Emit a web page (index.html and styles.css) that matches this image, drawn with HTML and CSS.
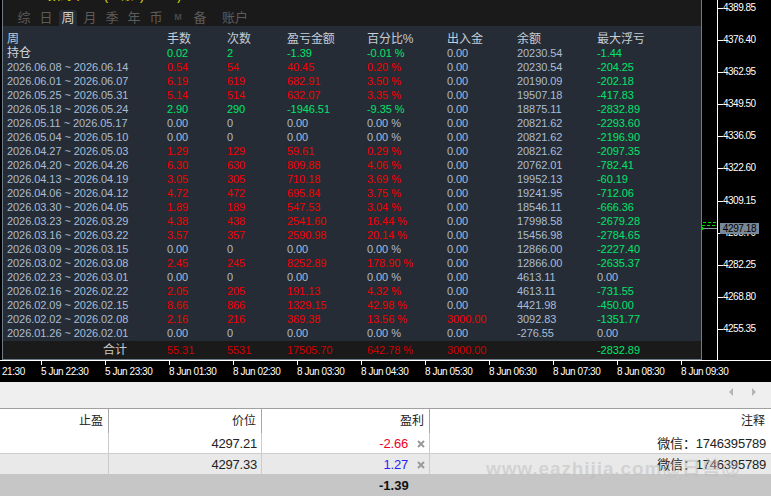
FILE: index.html
```html
<!DOCTYPE html>
<html lang="zh">
<head>
<meta charset="utf-8">
<title>Report</title>
<link rel="stylesheet" href="styles.css">
</head>
<body>
<div class="app">
  <div class="chart">
    <div class="plot">
      <div class="panel">
        <div class="clip-text">数码币      (    账  )          )</div>
        <div class="tabs">
          <span class="tab">综</span><span class="tab">日</span><span class="tab active">周</span><span class="tab">月</span><span class="tab">季</span><span class="tab">年</span><span class="tab">币</span><span class="tab m">M</span><span class="tab">备</span><span class="tab wide">账户</span>
        </div>
        <div class="table">
          <div class="row head"><span>周</span><span>手数</span><span>次数</span><span>盈亏金额</span><span>百分比%</span><span>出入金</span><span>余额</span><span>最大浮亏</span></div>
          <div class="row hold"><span class="h">持仓</span><span class="g">0.02</span><span class="g">2</span><span class="g">-1.39</span><span class="g">-0.01 %</span><span>0.00</span><span>20230.54</span><span class="g">-1.44</span></div>
          <div class="row"><span>2026.06.08 ~ 2026.06.14</span><span class="r">0.54</span><span class="r">54</span><span class="r">40.45</span><span class="r">0.20 %</span><span>0.00</span><span>20230.54</span><span class="g">-204.25</span></div>
          <div class="row"><span>2026.06.01 ~ 2026.06.07</span><span class="r">6.19</span><span class="r">619</span><span class="r">682.91</span><span class="r">3.50 %</span><span>0.00</span><span>20190.09</span><span class="g">-202.18</span></div>
          <div class="row"><span>2026.05.25 ~ 2026.05.31</span><span class="r">5.14</span><span class="r">514</span><span class="r">632.07</span><span class="r">3.35 %</span><span>0.00</span><span>19507.18</span><span class="g">-417.83</span></div>
          <div class="row"><span>2026.05.18 ~ 2026.05.24</span><span class="g">2.90</span><span class="g">290</span><span class="g">-1946.51</span><span class="g">-9.35 %</span><span>0.00</span><span>18875.11</span><span class="g">-2832.89</span></div>
          <div class="row"><span>2026.05.11 ~ 2026.05.17</span><span>0.00</span><span>0</span><span>0.00</span><span>0.00 %</span><span>0.00</span><span>20821.62</span><span class="g">-2293.60</span></div>
          <div class="row"><span>2026.05.04 ~ 2026.05.10</span><span>0.00</span><span>0</span><span>0.00</span><span>0.00 %</span><span>0.00</span><span>20821.62</span><span class="g">-2196.90</span></div>
          <div class="row"><span>2026.04.27 ~ 2026.05.03</span><span class="r">1.29</span><span class="r">129</span><span class="r">59.61</span><span class="r">0.29 %</span><span>0.00</span><span>20821.62</span><span class="g">-2097.35</span></div>
          <div class="row"><span>2026.04.20 ~ 2026.04.26</span><span class="r">6.30</span><span class="r">630</span><span class="r">809.88</span><span class="r">4.06 %</span><span>0.00</span><span>20762.01</span><span class="g">-782.41</span></div>
          <div class="row"><span>2026.04.13 ~ 2026.04.19</span><span class="r">3.05</span><span class="r">305</span><span class="r">710.18</span><span class="r">3.69 %</span><span>0.00</span><span>19952.13</span><span class="g">-60.19</span></div>
          <div class="row"><span>2026.04.06 ~ 2026.04.12</span><span class="r">4.72</span><span class="r">472</span><span class="r">695.84</span><span class="r">3.75 %</span><span>0.00</span><span>19241.95</span><span class="g">-712.06</span></div>
          <div class="row"><span>2026.03.30 ~ 2026.04.05</span><span class="r">1.89</span><span class="r">189</span><span class="r">547.53</span><span class="r">3.04 %</span><span>0.00</span><span>18546.11</span><span class="g">-666.36</span></div>
          <div class="row"><span>2026.03.23 ~ 2026.03.29</span><span class="r">4.38</span><span class="r">438</span><span class="r">2541.60</span><span class="r">16.44 %</span><span>0.00</span><span>17998.58</span><span class="g">-2679.28</span></div>
          <div class="row"><span>2026.03.16 ~ 2026.03.22</span><span class="r">3.57</span><span class="r">357</span><span class="r">2590.98</span><span class="r">20.14 %</span><span>0.00</span><span>15456.98</span><span class="g">-2784.65</span></div>
          <div class="row"><span>2026.03.09 ~ 2026.03.15</span><span>0.00</span><span>0</span><span>0.00</span><span>0.00 %</span><span>0.00</span><span>12866.00</span><span class="g">-2227.40</span></div>
          <div class="row"><span>2026.03.02 ~ 2026.03.08</span><span class="r">2.45</span><span class="r">245</span><span class="r">8252.89</span><span class="r">178.90 %</span><span>0.00</span><span>12866.00</span><span class="g">-2635.37</span></div>
          <div class="row"><span>2026.02.23 ~ 2026.03.01</span><span>0.00</span><span>0</span><span>0.00</span><span>0.00 %</span><span>0.00</span><span>4613.11</span><span>0.00</span></div>
          <div class="row"><span>2026.02.16 ~ 2026.02.22</span><span class="r">2.05</span><span class="r">205</span><span class="r">191.13</span><span class="r">4.32 %</span><span>0.00</span><span>4613.11</span><span class="g">-731.55</span></div>
          <div class="row"><span>2026.02.09 ~ 2026.02.15</span><span class="r">8.66</span><span class="r">866</span><span class="r">1329.15</span><span class="r">42.98 %</span><span>0.00</span><span>4421.98</span><span class="g">-450.00</span></div>
          <div class="row"><span>2026.02.02 ~ 2026.02.08</span><span class="r">2.16</span><span class="r">216</span><span class="r">369.38</span><span class="r">13.56 %</span><span class="r">3000.00</span><span>3092.83</span><span class="g">-1351.77</span></div>
          <div class="row"><span>2026.01.26 ~ 2026.02.01</span><span>0.00</span><span>0</span><span>0.00</span><span>0.00 %</span><span>0.00</span><span>-276.55</span><span>0.00</span></div>
        </div>
        <div class="row foot"><span class="total">合计</span><span class="dr">55.31</span><span class="dr">5531</span><span class="dr">17505.70</span><span class="dr">642.78 %</span><span class="dr">3000.00</span><span></span><span class="g">-2832.89</span></div>
      </div>
      <div class="gutter">
        <svg class="marks" width="15" height="12" viewBox="0 0 15 12" aria-hidden="true">
          <path d="M1 1.5h3M6 1.5h3M11 1.5h3" stroke="#00e000"/>
          <path d="M0 4.5h15" stroke="#00e000" stroke-dasharray="3 2"/>
          <path d="M0 7.5h15" stroke="#8a97a5"/>
          <path d="M0.5 6v3" stroke="#00e000"/>
        </svg>
      </div>
    </div>
    <div class="axis">
      <div class="tick">4389.85</div>
      <div class="tick">4376.40</div>
      <div class="tick">4362.95</div>
      <div class="tick">4349.50</div>
      <div class="tick">4336.05</div>
      <div class="tick">4322.60</div>
      <div class="tick">4309.15</div>
      <div class="tick">4295.70</div>
      <div class="tick">4282.25</div>
      <div class="tick">4268.80</div>
      <div class="tick">4255.35</div>
      <div class="price">4297.18</div>
    </div>
  </div>
  <div class="times">
    <span class="time first">21:30</span><span class="time">5 Jun 22:30</span><span class="time">5 Jun 23:30</span><span class="time">8 Jun 01:30</span><span class="time">8 Jun 02:30</span><span class="time">8 Jun 03:30</span><span class="time">8 Jun 04:30</span><span class="time">8 Jun 05:30</span><span class="time">8 Jun 06:30</span><span class="time">8 Jun 07:30</span><span class="time">8 Jun 08:30</span><span class="time">8 Jun 09:30</span>
  </div>
  <div class="toolbar">
    <svg width="27" height="8" viewBox="0 0 27 8" aria-hidden="true"><path d="M4 0v8L0 4zM23 0v8l4-4z" fill="#b4b4b4"/></svg>
  </div>
  <div class="grid">
    <div class="grow ghead"><span>止盈</span><span>价位</span><span>盈利</span><span>注释</span></div>
    <div class="grow data"><span></span><span>4297.21</span><span class="pl"><b class="neg">-2.66</b><svg class="x" width="8" height="8" viewBox="0 0 8 8" aria-hidden="true"><path d="M1 1l6 6M7 1L1 7" stroke="#9a9a9a" stroke-width="2"/></svg></span><span>微信：1746395789</span></div>
    <div class="grow data alt"><span></span><span>4297.33</span><span class="pl"><b class="pos">1.27</b><svg class="x" width="8" height="8" viewBox="0 0 8 8" aria-hidden="true"><path d="M1 1l6 6M7 1L1 7" stroke="#9a9a9a" stroke-width="2"/></svg></span><span>微信：1746395789</span></div>
    <div class="sum">-1.39</div>
  </div>
  <div class="mark">www.eazhijia.com@日兽@</div>
</div>
</body>
</html>
```

FILE: styles.css
```css
* { box-sizing: border-box; }
html, body { margin: 0; padding: 0; background: #fff; }
body { width: 771px; height: 501px; overflow: hidden; font-family: "Liberation Sans", "Noto Sans CJK SC", sans-serif; }
.app { position: relative; width: 771px; height: 501px; overflow: hidden; }

.chart { display: flex; height: 360px; background: #000; }
.plot { display: flex; width: 718px; border-right: 1px solid #fff; }
.panel { position: relative; flex: 0 0 700px; margin-left: 2px; height: 360px; background: #1a1a1a; border-left: 1px solid #6d7a88; border-right: 1px solid #6d7a88; border-bottom: 1px solid #6d7a88; overflow: hidden; }
.clip-text { position: absolute; left: 45px; top: -10px; font-size: 12px; line-height: 12px; color: #e6e600; white-space: pre; }
.tabs { display: flex; height: 26px; padding: 10px 0 0 10px; }
.tab { width: 22px; height: 16px; text-align: center; font-size: 13px; line-height: 15px; color: #5c5c5c; }
.tab.active { color: #d0d0d0; background: #262c35; background-clip: padding-box; border: solid transparent; border-width: 0 2px; border-radius: 4px 4px 0 0; }
.tab.m { font-size: 9px; font-weight: bold; color: #4a4a4a; }
.tab.wide { width: 34px; margin-left: 7px; }

.table { height: 315px; padding-top: 6px; background: #252c35; }
.row { display: grid; grid-template-columns: 160px 60px 60px 80px 80px 70px 80px 1fr; padding-left: 4px; height: 14px; font-size: 11px; line-height: 14px; color: #abbcd4; white-space: nowrap; letter-spacing: -0.06px; }
.row.head { color: #c4cdd8; font-size: 12px; }
.row.hold .h { color: #d0d6de; font-size: 12px; }
.g { color: #00e46a; }
.r { color: #f40000; }
.dr { color: #d00000; }
.row.foot { height: 18px; line-height: 18px; background: #1a1a1a; }
.total { color: #c8c8c8; font-size: 12px; text-align: right; padding-right: 40px; }

.gutter { position: relative; flex: 1; }
.marks { position: absolute; left: 0; top: 221px; display: block; }

.axis { position: relative; flex: 1; padding-top: 1px; background: #000; }
.tick { position: relative; height: 32.1px; line-height: 14px; padding-left: 5px; font-size: 10px; letter-spacing: -0.5px; color: #fff; }
.tick::before { content: ""; position: absolute; left: 0; top: 7px; width: 5px; height: 1px; background: #fff; }
.price { position: absolute; left: 2px; top: 223px; width: 39px; height: 11px; line-height: 11px; text-align: center; font-size: 10px; letter-spacing: -0.4px; color: #000; background: #778899; }

.times { display: flex; height: 22px; padding-left: 41px; background: #000; border-top: 1px solid #fff; position: relative; overflow: hidden; }
.time { position: relative; flex: 0 0 64px; padding-top: 4px; font-size: 10px; letter-spacing: -0.45px; line-height: 14px; color: #fff; white-space: nowrap; }
.time::before { content: ""; position: absolute; left: 0; top: 0; width: 1px; height: 4px; background: #fff; }
.time.first { flex: 0 0 0; min-width: 0; width: 0; margin-left: -39px; margin-right: 39px; }
.time.first::before { display: none; }

.toolbar { display: flex; justify-content: flex-end; align-items: center; height: 26px; padding: 0 15px 6px 0; background: #efefef; }

.grid { border-top: 1px solid #a0a0a0; font-size: 13px; letter-spacing: -0.2px; color: #222; background: #fff; }
.grow { display: grid; grid-template-columns: 109px 153px 168px 1fr; height: 21px; line-height: 20px; text-align: right; border-bottom: 1px solid #ccc; }
.grow > span { padding-right: 4px; border-right: 1px solid #ccc; white-space: nowrap; }
.grow > span:last-child { border-right: 0; padding-right: 5px; }
.ghead { height: 24px; line-height: 25px; border-bottom: 0; letter-spacing: 0; }
.ghead > span { border-right: 1px solid #a8a8a8; padding-right: 5px; font-size: 12px; }
.ghead > span:nth-child(3) { padding-right: 5px; }
.ghead > span:last-child { padding-right: 6px; }
.data > span { padding-top: 1px; }
.alt { background: #e9e9e9; height: 20px; border-bottom: 0; }
.pl { display: flex; justify-content: flex-end; align-items: center; gap: 9px; }
.pl b { font-weight: normal; }
.neg { color: #f0001e; }
.pos { color: #2a1ff0; }
.x { display: block; }
.sum { height: 22px; line-height: 21px; padding: 1px 0 0 379px; background: #c6c6c6; font-weight: bold; letter-spacing: 0; text-align: left; color: #111; }

.mark { position: absolute; left: 486px; top: 458px; font-size: 19px; line-height: 22px; font-weight: bold; letter-spacing: 0.9px; color: rgba(190,190,190,0.55); white-space: nowrap; }
```
